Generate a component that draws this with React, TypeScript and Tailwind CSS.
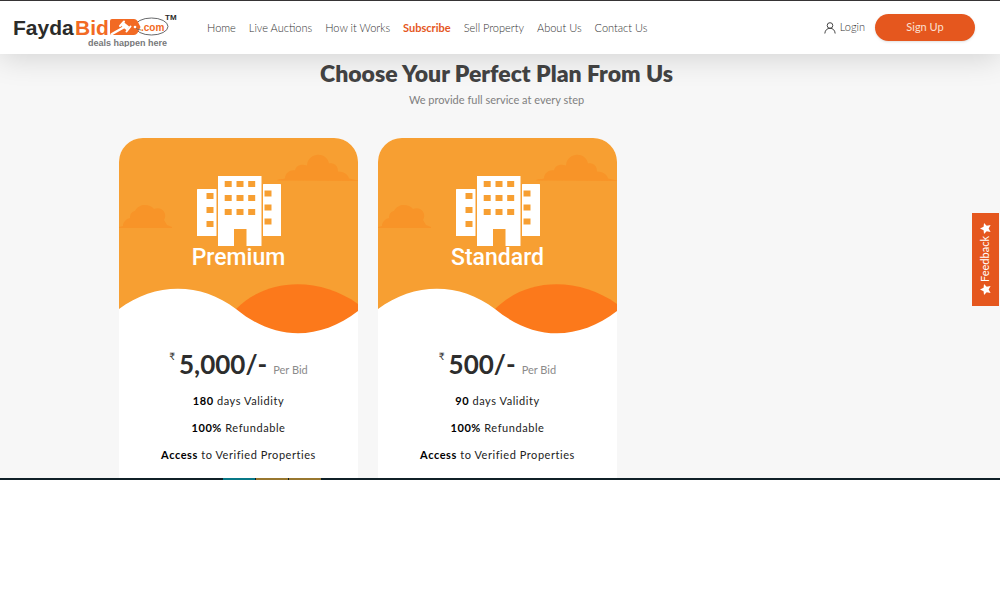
import { useId } from "react";

const links = ["Home", "Live Auctions", "How it Works", "Subscribe", "Sell Property", "About Us", "Contact Us"];

const plans = [
  { name: "Premium", price: "5,000/-", days: "180" },
  { name: "Standard", price: "500/-", days: "90" },
];

function Logo() {
  return (
    <svg width="166" height="38" viewBox="0 0 166 38" role="img" aria-label="FaydaBid.com deals happen here">
      <g fontFamily="'Liberation Sans', Arial, sans-serif" fontWeight="700">
        <text x="0" y="26" fontSize="21" fill="#2b2b29">Fayda</text>
        <text x="62" y="26" fontSize="21" fill="#f26a24">Bid</text>
        <text x="75" y="37" fontSize="9" fill="#77787a">deals happen here</text>
        <text x="152" y="11" fontSize="8" fill="#2b2b29">TM</text>
      </g>
      <ellipse cx="138.500" cy="17.500" rx="16.500" ry="8.500" fill="#fff" stroke="#68696b" strokeWidth="1" />
      <path d="M99 10h22q2 0 3.500 2l3 6-3 6q-1.500 2-3.500 2H99q-2 0-2-2V12q0-2 2-2Z" fill="#f26a24" />
      <g stroke="#fff" fill="none">
        <path d="m109.500 15 5.500 4.500" strokeWidth="4.500" />
        <path d="m107 17 4-4.500m2.500 10 4-5" strokeWidth="2" strokeLinecap="round" />
        <path d="M110.500 18.500 99 25" strokeWidth="2.500" strokeLinecap="round" />
      </g>
      <path d="M122 18q2 3 6 3" fill="none" stroke="#68696b" strokeWidth=".8" />
      <circle cx="122" cy="18" r="1.300" fill="#fff" />
      <text x="128" y="22" fontSize="10" fontWeight="700" fill="#f26a24" fontFamily="'Liberation Sans', Arial, sans-serif">.com</text>
    </svg>
  );
}

function UserIcon() {
  return (
    <svg className="h-3 w-3" viewBox="0 0 12 12" fill="none" stroke="#444" strokeWidth="1" aria-hidden="true">
      <circle cx="6" cy="3.500" r="2.800" />
      <path d="M.8 11.500C1.200 8 3.200 6.300 6 6.300s4.800 1.700 5.200 5.200" />
    </svg>
  );
}

function Star() {
  return (
    <svg className="h-[11px] w-[11px] rotate-90" viewBox="0 0 20 20" fill="currentColor" aria-hidden="true">
      <path d="m10 0 3 6.500 7 .8-5.200 4.900 1.400 7.100L10 15.700l-6.200 3.600 1.400-7.100L0 7.300l7-.8Z" />
    </svg>
  );
}

function Scenery() {
  return (
    <svg className="absolute inset-0 h-full w-full" viewBox="0 0 239 196" preserveAspectRatio="none" aria-hidden="true">
      <rect width="239" height="190" fill="#f79f32" />
      <g fill="#f89428">
        <path d="M158 42.500c1-2 5-1 8-2 0-6 6-9 10-8 1-5 6-7 12-5 1-14 20-14 22-2 6-1 9 3 9 8 6 0 10 3 11 7l9 2v.500Z" />
        <path d="M0 90v-1l4-1c0-4 3-7 7-8 0-5 3-7 5-7 4-8 15-7 19-2 8-3 14 5 10 11l3 5 5 2v1Z" />
      </g>
      <path d="M117 171C149 139 201 139 239 166V196H117Z" fill="#fc791b" />
      <path d="M0 171C36 144 82 144 117 171C156 203 200 203 239 173V197H0Z" fill="#fff" />
    </svg>
  );
}

function Building() {
  const rows = [0, 14, 28];
  return (
    <svg width="84" height="70" viewBox="0 0 84 70" aria-hidden="true">
      <g fill="#fff">
        <rect y="13" width="19.500" height="47" rx=".5" />
        <rect x="66" y="8" width="18" height="52" rx=".5" />
        <path d="M21 0H64.500V70H49.500V53H37V70H21Z" />
      </g>
      <g fill="#f79f32">
        {rows.map((y) => (
          <g key={y}>
            <rect x="9.500" y={17 + y} width="7" height="6" />
            <rect x="27.700" y={5 + y} width="7" height="6" />
            <rect x="39.500" y={5 + y} width="7" height="6" />
            <rect x="51.200" y={5 + y} width="7" height="6" />
            <rect x="67.500" y={14.5 + y} width="7" height="6" />
          </g>
        ))}
      </g>
    </svg>
  );
}

function PlanCard({ name, price, days }: { name: string; price: string; days: string }) {
  const id = useId();
  return (
    <article aria-labelledby={id} className="overflow-hidden rounded-t-3xl bg-white">
      <div className="relative h-[196px] bg-white">
        <Scenery />
        <div className="relative flex flex-col items-center pt-[38px]">
          <Building />
          <h2 id={id} className="font-[Roboto,sans-serif] text-[23px] leading-6 font-medium text-white">{name}</h2>
        </div>
      </div>
      <div className="flex flex-col items-center pt-3 pb-[15px]">
        <p className="flex items-baseline text-[#2d2d2d]">
          <span className="mr-1 self-start pt-0.5 text-[10px] leading-4">₹</span>
          <span className="text-[26px] leading-9 font-bold">{price}</span>
          <span className="ml-1.5 text-[11px] text-[#8b8b8b]">Per Bid</span>
        </p>
        <ul className="mt-[11px] flex flex-col gap-[11px] text-center text-[11px] leading-4 tracking-wider text-[#222]">
          <li><b className="text-black">{days}</b> days Validity</li>
          <li><b className="text-black">100%</b> Refundable</li>
          <li><b className="text-black">Access</b> to Verified Properties</li>
        </ul>
      </div>
    </article>
  );
}

export default function App() {
  return (
    <div className="min-h-screen bg-white font-[Lato,sans-serif]">
      <header className="relative flex h-[54px] items-center border-t border-[#363435] bg-white pr-[25px] pl-[13px] shadow-[0_4px_30px_rgba(0,0,0,0.15)]">
        <a href="#home" className="shrink-0"><Logo /></a>
        <nav aria-label="Main" className="ml-7 flex gap-[13px] text-[11px] leading-4 font-light whitespace-nowrap text-[#333]">
          {links.map((label) => (
            <a key={label} href="#" className={label === "Subscribe" ? "font-bold text-[#e5571e]" : ""}>{label}</a>
          ))}
        </nav>
        <div className="ml-auto flex items-center gap-2.5">
          <a href="#login" className="flex items-center gap-1 text-[11px] font-light text-[#333]"><UserIcon />Login</a>
          <button type="button" className="h-[27px] w-[100px] rounded-full bg-[#e5571e] text-[11px] text-[#fbe0d3] shadow-sm">Sign Up</button>
        </div>
      </header>
      <main className="bg-[#f7f7f7] pt-1">
        <div className="pr-[7px] text-center">
          <h1 className="text-[23px] leading-[30px] font-extrabold text-[#434343]">Choose Your Perfect Plan From Us</h1>
          <p className="mt-1 text-[11px] leading-4 text-[#808080]">We provide full service at every step</p>
        </div>
        <div className="mt-[30px] grid grid-cols-3 gap-5 pr-[124px] pl-[119px]">
          {plans.map((plan) => <PlanCard key={plan.name} {...plan} />)}
        </div>
      </main>
      <div className="flex h-0.5 bg-[#102027]" aria-hidden="true">
        <span className="ml-[223px] w-8 bg-[#087887]" />
        <span className="ml-px w-8 bg-[#98772f]" />
        <span className="ml-px w-8 bg-[#98772f]" />
      </div>
      <button type="button" className="absolute top-[213px] right-px flex h-[93px] w-[27px] rotate-180 items-center justify-center gap-0.5 bg-[#e5571e] text-[11px] text-white [writing-mode:vertical-rl]">
        <Star />Feedback<Star />
      </button>
    </div>
  );
}
